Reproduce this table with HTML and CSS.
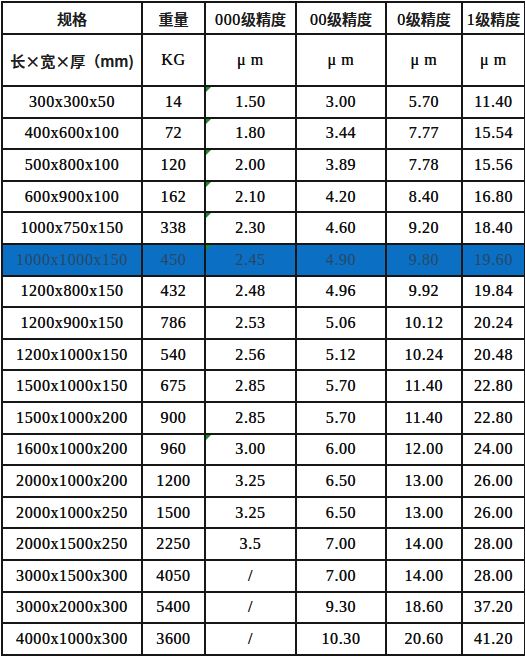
FILE: index.html
```html
<!DOCTYPE html>
<html>
<head>
<meta charset="utf-8">
<link rel="stylesheet" href="styles.css">
</head>
<body>
<table class="spec">
<colgroup>
<col class="c1"><col class="c2"><col class="c3"><col class="c4"><col class="c5"><col class="c6">
</colgroup>
<tr class="head"><td class="cjk">规格</td><td class="cjk">重量</td><td>000<span class="cjk">级精度</span></td><td>00<span class="cjk">级精度</span></td><td>0<span class="cjk">级精度</span></td><td>1<span class="cjk">级精度</span></td></tr>
<tr class="units"><td class="cjk">长×宽×厚（mm)</td><td>KG</td><td>μ m</td><td>μ m</td><td>μ m</td><td>μ m</td></tr>
<tr><td>300x300x50</td><td>14</td><td class="tri">1.50</td><td>3.00</td><td>5.70</td><td>11.40</td></tr>
<tr><td>400x600x100</td><td>72</td><td class="tri">1.80</td><td>3.44</td><td>7.77</td><td>15.54</td></tr>
<tr><td>500x800x100</td><td>120</td><td class="tri">2.00</td><td>3.89</td><td>7.78</td><td>15.56</td></tr>
<tr><td>600x900x100</td><td>162</td><td class="tri">2.10</td><td>4.20</td><td>8.40</td><td>16.80</td></tr>
<tr><td>1000x750x150</td><td>338</td><td class="tri">2.30</td><td>4.60</td><td>9.20</td><td>18.40</td></tr>
<tr class="sel"><td>1000x1000x150</td><td>450</td><td class="tri">2.45</td><td>4.90</td><td>9.80</td><td>19.60</td></tr>
<tr><td>1200x800x150</td><td>432</td><td>2.48</td><td>4.96</td><td>9.92</td><td>19.84</td></tr>
<tr><td>1200x900x150</td><td>786</td><td>2.53</td><td>5.06</td><td>10.12</td><td>20.24</td></tr>
<tr><td>1200x1000x150</td><td>540</td><td>2.56</td><td>5.12</td><td>10.24</td><td>20.48</td></tr>
<tr><td>1500x1000x150</td><td>675</td><td>2.85</td><td>5.70</td><td>11.40</td><td>22.80</td></tr>
<tr><td>1500x1000x200</td><td>900</td><td>2.85</td><td>5.70</td><td>11.40</td><td>22.80</td></tr>
<tr><td>1600x1000x200</td><td>960</td><td class="tri">3.00</td><td>6.00</td><td>12.00</td><td>24.00</td></tr>
<tr><td>2000x1000x200</td><td>1200</td><td>3.25</td><td>6.50</td><td>13.00</td><td>26.00</td></tr>
<tr><td>2000x1000x250</td><td>1500</td><td>3.25</td><td>6.50</td><td>13.00</td><td>26.00</td></tr>
<tr><td>2000x1500x250</td><td>2250</td><td>3.5</td><td>7.00</td><td>14.00</td><td>28.00</td></tr>
<tr><td>3000x1500x300</td><td>4050</td><td>/</td><td>7.00</td><td>14.00</td><td>28.00</td></tr>
<tr><td>3000x2000x300</td><td>5400</td><td>/</td><td>9.30</td><td>18.60</td><td>37.20</td></tr>
<tr><td>4000x1000x300</td><td>3600</td><td>/</td><td>10.30</td><td>20.60</td><td>41.20</td></tr>
</table>
</body>
</html>
```
FILE: styles.css
```css
html, body {
  margin: 0;
  padding: 0;
  background: #ffffff;
}
body {
  padding: 1px 0 0 1px;
}
.spec {
  border-collapse: collapse;
  table-layout: fixed;
  width: 523px;
  font-family: "Liberation Serif", "Noto Sans CJK SC", serif;
  font-size: 16px;
  color: #0e0e0e;
  letter-spacing: 0.6px;
}
.c1 { width: 140px; }
.c2 { width: 63px; }
.c3 { width: 91px; }
.c4 { width: 90px; }
.c5 { width: 76px; }
.c6 { width: 63px; }
.spec td {
  border: 2px solid #161616;
  text-align: center;
  vertical-align: middle;
  padding: 0;
  height: 29.6px;
  white-space: nowrap;
  overflow: hidden;
  text-shadow: 0 0 0.4px #222;
}
.spec tr.head td {
  height: 30px;
}
.spec tr.units td {
  height: 50px;
}
.cjk {
  font-family: "Noto Sans CJK SC", sans-serif;
  font-size: 15px;
  font-weight: 500;
  letter-spacing: 0;
  color: #1e1e1e;
}
.spec tr.sel td {
  background: #0b6fc4;
  color: #2a4763;
  text-shadow: none;
}
.tri {
  position: relative;
}
.tri::before {
  content: "";
  position: absolute;
  left: 0;
  top: 0;
  width: 0;
  height: 0;
  border-top: 5px solid #1f8a2a;
  border-right: 5px solid transparent;
}
```
